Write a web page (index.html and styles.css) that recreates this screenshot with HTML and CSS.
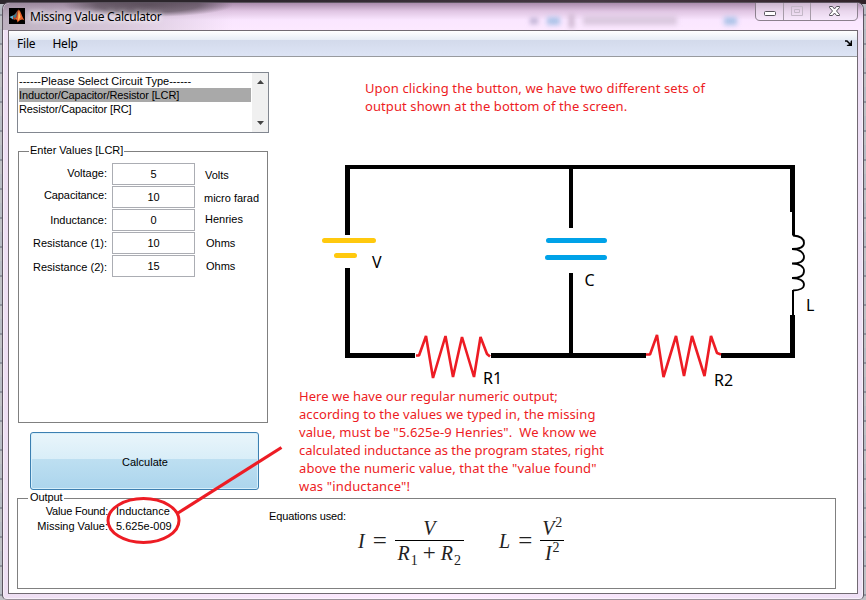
FILE: index.html
```html
<!DOCTYPE html>
<html lang="en">
<head>
<meta charset="utf-8">
<title>Missing Value Calculator</title>
<link rel="stylesheet" href="styles.css">
</head>
<body>
<div class="window">
  <header class="titlebar">
    <svg class="logo" width="16" height="16" viewBox="0 0 16 16">
      <rect width="16" height="16" fill="#000"/>
      <path d="M0.500 9L4 7.500L6.500 9.500L4 11.500Z" fill="#5fb4d8"/>
      <path d="M4 7.500C7 6.500 7.500 3 9.500 1.500L9 8L6 12L4 11Z" fill="#a8432a"/>
      <path d="M4 7.500C6 7 7 5 8 3.500L7 9L5.500 10Z" fill="#387c90"/>
      <path d="M9.500 1.500C12 3 13 9 15.500 12.500C13 10.500 11 12 8.500 14.500C8.500 12 7 11 6 11C9 9 9 5 9.500 1.500Z" fill="#e8602a"/>
      <path d="M9.800 2.500L11.500 9L9 13C9.500 9 9 6 9.800 2.500Z" fill="#ffc060"/>
    </svg>
    <h1 class="title">Missing Value Calculator</h1>
    <div class="ghosts"><i class="ghost dot"></i><i class="ghost blue"></i><i class="ghost bar"></i><i class="ghost wide"></i><i class="ghost blue far"></i></div>
    <svg class="controls" width="104" height="20" viewBox="0 0 104 20">
      <path d="M.5 0V13Q.5 17.500 5 17.500H98Q102.500 17.500 102.500 13V0" fill="#f5eaf8" fill-opacity=".45" stroke="#8c808e"/>
      <path d="M28.500 0V17M55.500 0V17" stroke="#a69ba8"/>
      <rect x="9.500" y="8.500" width="11" height="4" rx="1" fill="#fff" stroke="#55525b"/>
      <path d="M36.500 3.500h11v9h-11zM39.500 6.500h5v3h-5z" fill="none" stroke="#c3b7c7"/>
      <path d="M74.500 3.500h3l2 2.500 2-2.500h3v1l-3 3.500 3 3.500v1h-3l-2-2.500-2 2.500h-3v-1l3-3.500-3-3.500z" fill="#fff" stroke="#55525b"/>
    </svg>
  </header>
  <main class="client">
    <nav class="menubar">
      <span class="file">File</span><span>Help</span>
      <svg class="dock" width="8" height="7" viewBox="0 0 8 7"><path d="M0 1H2L5.500 4.500" fill="none" stroke="#000" stroke-width="1.500"/><path d="M7 0V6H1.500L3 4.500H4L5.500 3V1.500Z" fill="#000"/></svg>
    </nav>
    <div class="workspace">
      <section class="left">
        <div class="listbox">
          <ul>
            <li>------Please Select Circuit Type------</li>
            <li class="tight selected">Inductor/Capacitor/Resistor [LCR]</li>
            <li class="tight">Resistor/Capacitor [RC]</li>
          </ul>
          <div class="scroll"><svg width="7" height="4" viewBox="0 0 7 4"><path d="M0 4L3.500 0L7 4Z" fill="#444"/></svg><svg width="7" height="4" viewBox="0 0 7 4"><path d="M0 0H7L3.500 4Z" fill="#444"/></svg></div>
        </div>
        <div class="panel values">
          <span class="legend">Enter Values [LCR]</span>
          <div class="row"><label class="r1">Voltage:</label><b>5</b><span class="u1">Volts</span></div>
          <div class="row"><label class="r2">Capacitance:</label><b>10</b><span class="u2">micro farad</span></div>
          <div class="row"><label class="r3">Inductance:</label><b>0</b><span class="u3">Henries</span></div>
          <div class="row"><label class="r4">Resistance (1):</label><b>10</b><span class="u4">Ohms</span></div>
          <div class="row"><label class="r5">Resistance (2):</label><b>15</b><span class="u4">Ohms</span></div>
        </div>
        <button class="calculate">Calculate</button>
      </section>
      <section class="right">
        <p class="note first"><span class="n1">Upon clicking the button, we have two different sets of</span><span class="n2">output shown at the bottom of the screen.</span></p>
        <svg class="circuit" width="540" height="240" viewBox="300 150 540 240">
          <g fill="none" stroke="#000">
            <path d="M347.500 235V165M347.500 268V358M345 355.500H415M491 355.500H646M721 355.500H795M792.500 358V315M792.500 165V212" stroke-width="5"/>
            <path d="M345 167H795M571 167V228M571 273V355" stroke-width="4"/>
            <path d="M793.500 211V235.500" stroke-width="3"/>
            <path d="M793 290V316" stroke-width="2"/>
            <path d="M793 235.500C800 236 804 239 804 243C804 247 800 249 792 249C800 249 804 253 804 257C804 261 800 263.500 792 263.500C800 263.500 804 267 804 271C804 275 800 278 792 278C800 278 804 281 804 284.500C804 288 800 290.500 793 290.500" stroke-width="1.800"/>
          </g>
          <g fill="none" stroke-width="5" stroke-linecap="round">
            <path d="M324.500 240.500H373.500M336.500 255.500H354.500" stroke="#ffc90e"/>
            <path d="M548.500 240.500H604.500M547.500 257.500H604.500" stroke="#00a2e8"/>
          </g>
          <g fill="none" stroke="#ed1c24" stroke-width="2.600" stroke-linejoin="bevel">
            <path d="M416 355.500H419L426 336L433 378L445.500 336L453 377L462 337L474 377L480.500 337L487 354L490 356.500"/>
            <path d="M646 354.500H650L657 335L663.500 377L676 336L684 376L692 336L704.500 376L711 336L717 353L721 354.500"/>
          </g>
          <g class="labels">
            <text x="372" y="268">V</text><text x="584.500" y="286">C</text><text x="806" y="311">L</text>
            <text x="483" y="384">R1</text><text x="714" y="386">R2</text>
          </g>
        </svg>
        <p class="note second"><span class="s1">Here we have our regular numeric output;</span><span class="s2">according to the values we typed in, the missing</span><span class="s3">value, must be "5.625e-9 Henries".&nbsp; We know we</span><span class="s4">calculated inductance as the program states, right</span><span class="s5">above the numeric value, that the "value found"</span><span class="s6">was "inductance"!</span></p>
      </section>
      <section class="panel output">
        <span class="legend">Output</span>
        <dl><dt class="found">Value Found:</dt><dd>Inductance</dd><dt>Missing Value:</dt><dd>5.625e-009</dd></dl>
        <span class="used">Equations used:</span>
        <div class="eq one"><i>I</i><span class="equals">=</span><span class="frac"><span class="num"><i>V</i></span><span><i>R</i><sub>1</sub> <span class="plus">+</span> <i>R</i><sub>2</sub></span></span></div>
        <div class="eq two"><i>L</i><span class="equals">=</span><span class="frac"><span class="num"><i>V</i><sup>2</sup></span><span><i>I</i><sup>2</sup></span></span></div>
      </section>
    </div>
  </main>
</div>
<svg class="markup" width="190" height="110" viewBox="100 440 190 110"><g fill="none" stroke="#ed1c24" stroke-width="3"><ellipse cx="143.500" cy="520.500" rx="35.500" ry="22"/><path d="M178 513L281.500 447.500" stroke-width="3.200"/></g></svg>
</body>
</html>
```

FILE: styles.css
```css
* { box-sizing: border-box; }
body { margin: 0; width: 866px; height: 600px; overflow: hidden; padding: 2px 1px 0 2px; font: 11px/14px "Liberation Sans", Arial, sans-serif; color: #000;
  background: linear-gradient(90deg, #2c262c 0 250px, #453842 600px, #302228) 0 0 / 100% 4px no-repeat, repeating-linear-gradient(#b8bcc4 0 14px, #8e939d 14px 16px, #c0c1c5 16px 29px); }
.window { height: 598px; padding: 0 6px 6px; border: 1px solid #5c535f; border-bottom-color: #99909a; border-radius: 7px 7px 5px 5px; box-shadow: inset 0 0 0 1px #fff8;
  background: linear-gradient(90deg, #eedff3, #fdeaff 50%, #eedff5); width: 862px; }
.titlebar { height: 27px; margin: 0 -6px; padding: 5px 2px 0 6px; display: flex; align-items: flex-start; border-radius: 7px 7px 0 0;
  background: radial-gradient(ellipse 85px 12px at 145px 2px, #3c343bb0, #3c343b90 60%, #3c343b00), linear-gradient(90deg, #8d868f90, #8d868f50 120px, #8d868f00 230px), linear-gradient(#a98bab, #dfc4e2 8px, #fae6ff 17px, #fce9ff); }
.title { margin: 0 0 0 5px; font: 12px/17px "Noto Sans", "Open Sans", sans-serif; letter-spacing: -.25px; width: 150px; white-space: nowrap; text-shadow: 0 0 7px #fff, 0 0 5px #fff; }
.ghosts { flex: 1; display: flex; align-items: center; height: 17px; padding-left: 350px; gap: 9px; filter: blur(2.500px); margin-top: 4px; }
.ghost { height: 6px; width: 8px; background: #b9add0; flex: none; }
.ghost.blue { width: 13px; height: 8px; background: #abc3e8; }
.ghost.bar { width: 5px; height: 14px; background: #c9b4cc; }
.ghost.wide { width: 94px; height: 9px; background: #cfbdd3; opacity: .75; }
.ghost.far { margin-left: 38px; }
.controls { flex: none; margin: -5px 2px 0 0; }
.client { height: 564px; border: 1px solid #716a72; background: #fff; width: 850px; margin-left: -1px; }
.menubar { height: 26px; display: flex; align-items: center; gap: 17px; padding: 0 4px 0 8px; font: 12px/16px "Noto Sans", "Open Sans", sans-serif; letter-spacing: -.2px; border-bottom: 1px solid #989a9e; background: linear-gradient(#fff, #e6ecf5 9px, #d3daeb 9px, #dde4f5); }
.dock { margin-left: auto; }
.workspace { height: 536px; display: grid; grid-template-columns: 259px 1fr; grid-template-rows: 441px 91px; background: #fff; }
.left { padding: 15px 0 0 8px; }
.listbox { width: 252px; height: 61px; border: 1px solid #828790; display: flex; }
.listbox ul { flex: 1; list-style: none; margin: 0; padding: 1px 1px 0; line-height: 14px; white-space: nowrap; }
.tight { letter-spacing: -.13px; }
.listbox .selected { background: #a9a9a9; }
.scroll { width: 16px; background: #f0f0f0; display: flex; flex-direction: column; align-items: center; justify-content: space-between; padding: 7px 0; }
.panel { border: 1px solid #808080; }
.legend { display: block; width: max-content; background: #fff; margin-top: -9px; height: 14px; padding: 0 2px; }
.values { width: 250px; height: 272px; margin: 18px 0 0 1px; }
.values .legend { margin-left: 10px; padding: 0 1px; }
.values .row:nth-of-type(1) { margin-top: 6px; }
.row { display: grid; grid-template-columns: 88px 83px 1fr; column-gap: 5px; height: 23px; white-space: nowrap; }
.row label { text-align: right; padding-top: 3px; }
.row b { font-weight: normal; height: 22px; border: 1px solid #abadb3; text-align: center; line-height: 20px; }
.row span { padding: 5px 0 0 4px; }
.row .r2 { padding-top: 2px; letter-spacing: -.1px; } .row .r3, .row .r4 { padding-top: 4px; } .row .r5 { padding-top: 5px; }
.row .u1 { padding-left: 5px; } .row .u3 { padding: 3px 0 0 5px; } .row .u4 { padding: 4px 0 0 6px; }
.calculate { display: block; margin: 9px 0 0 13px; width: 229px; height: 58px; padding: 2px 0 0 1px; font: inherit; border: 1px solid #3c7fb1; border-radius: 3px; box-shadow: inset 0 0 0 1px #d5eefa; background: linear-gradient(#e9f5fb, #d9eef8 46%, #bddff1 47%, #acd5ed); }
.right { display: flex; flex-direction: column; }
.note { margin: 0; color: #ed1c24; font: 13px/18px "Noto Sans", "Open Sans", sans-serif; white-space: nowrap; }
.note span { display: block; }
.n1 { letter-spacing: .12px; } .n2 { letter-spacing: .09px; }
.s1 { letter-spacing: .03px; } .s2 { letter-spacing: .07px; } .s3 { letter-spacing: .11px; }
.s4 { letter-spacing: -.02px; } .s5 { letter-spacing: .13px; } .s6 { letter-spacing: .17px; }
.first { padding: 22px 0 0 97px; }
.circuit { margin: 35px 0 0 32px; flex: none; }
.labels { font: 16px "Noto Sans", "Open Sans", sans-serif; }
.second { margin: -3px 0 0 31px; }
.output { grid-column: 1 / 3; width: 819px; height: 91px; margin-left: 8px; display: grid; grid-template-columns: 251px 89px 141px 1fr; grid-template-rows: 5px 1fr; }
.output .legend { grid-column: 1 / 5; margin-left: 10px; letter-spacing: -.1px; }
dl { margin: 0; display: grid; grid-template-columns: 90px 1fr; grid-auto-rows: 15px; column-gap: 8px; text-align: right; }
.found { letter-spacing: -.2px; }
dd { margin: 0; text-align: left; }
.used { padding-top: 5px; white-space: nowrap; letter-spacing: -.13px; }
.eq { display: flex; align-items: center; height: 64px; margin-top: 5px; font: 20px/22px "Liberation Serif", serif; color: #222; }
.equals { margin: 0 8px; font-size: 25px; }
.frac { text-align: center; white-space: nowrap; height: 48px; }
.frac > span { display: block; height: 26px; padding: 1px 1px 0; }
.frac .num { border-bottom: 1px solid #000; height: 24px; padding-top: 0; }
.one .frac { width: 69px; }
.plus { font-size: 23px; line-height: 10px; }
sub, sup { font-size: 14px; line-height: 0; margin-left: 1px; }
.two .frac { width: 24px; }
.markup { position: absolute; left: 100px; top: 440px; }
```
